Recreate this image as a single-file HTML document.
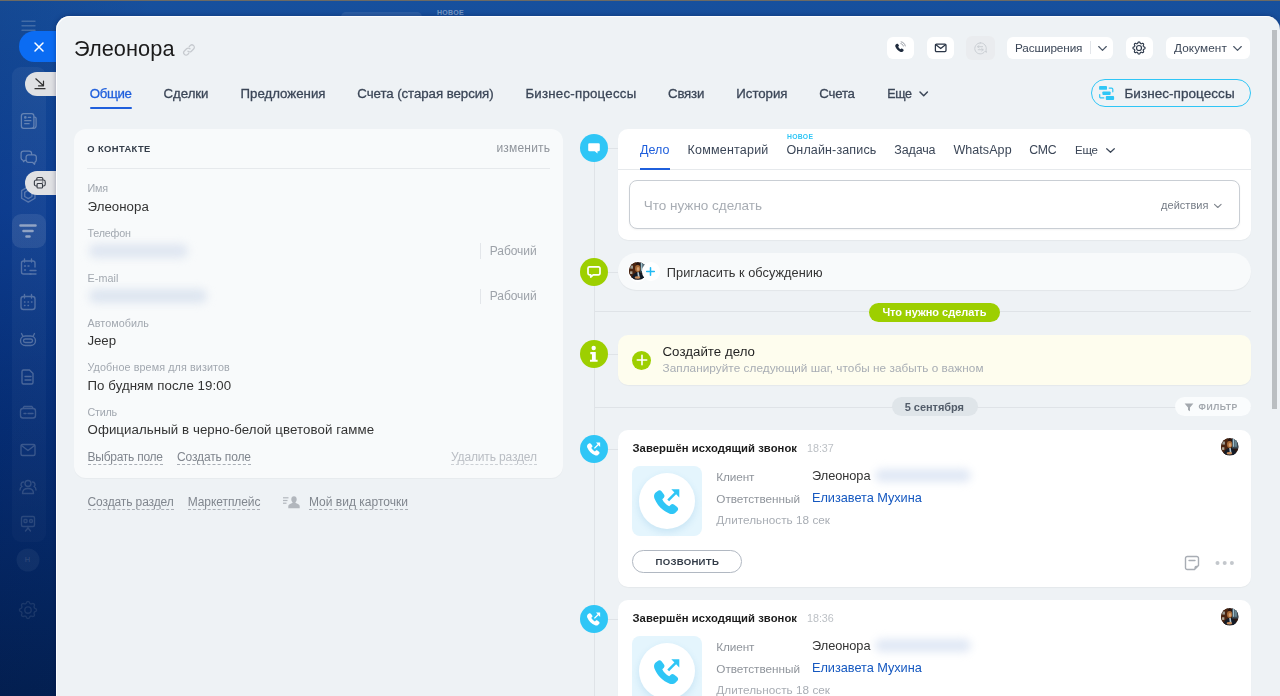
<!DOCTYPE html>
<html lang="ru">
<head>
<meta charset="utf-8">
<title>Элеонора</title>
<style>
*{box-sizing:border-box;margin:0;padding:0}
html,body{width:1280px;height:696px;overflow:hidden}
body{font-family:"Liberation Sans",sans-serif;position:relative;background:#0b3a86;color:#333}
.abs{position:absolute}
#bg{left:0;top:0;width:1280px;height:696px;background:linear-gradient(180deg,#17509d 0%,#0e4298 30%,#063078 62%,#032152 100%)}
#bgshade{left:0;top:0;width:1280px;height:696px;background:linear-gradient(90deg,rgba(0,10,60,.10) 0,rgba(0,10,60,0) 12%)}
#topline{left:0;top:0;width:1280px;height:1px;background:#6d6a63}
#panel{left:56.200px;top:15.800px;width:1224px;height:690px;background:#eef2f5;border-radius:14px 14px 0 0;box-shadow:inset 1px 1px 0 rgba(255,255,255,.85),0 0 5px rgba(0,10,50,.35)}
.card{border-radius:10px;background:#fff;box-shadow:0 1px 1px rgba(0,0,0,.04)}
.circ{left:579.800px;width:28.200px;height:28.200px;border-radius:50%}
.hb{top:37px;height:22.200px;border-radius:6px;background:#fff}
.t{position:absolute;white-space:nowrap;line-height:1}
.dash{border-bottom:1px dashed #a9aeb5;padding-bottom:.800px}
.med{-webkit-text-stroke:.3px currentColor}
.dashl{border-bottom-color:#ccd0d5}
</style>
</head>
<body>
<div id="bg" class="abs"></div>
<div id="bgshade" class="abs"></div>
<div id="topline" class="abs"></div>

<!-- LEFT RAIL -->
<div id="rail">
<div class="abs" style="left:12px;top:67px;width:34px;height:475px;border-radius:9px;background:linear-gradient(180deg,rgba(255,255,255,.05),rgba(255,255,255,.02))"></div>
<div class="abs" style="left:12px;top:214px;width:34px;height:34px;border-radius:9px;background:rgba(255,255,255,.085)"></div>
<svg class="abs" style="left:0;top:0" width="60" height="696" viewBox="0 0 60 696" fill="none" stroke="#e6e6e6" stroke-width="1.350" stroke-linecap="round" stroke-linejoin="round">
 <g opacity=".22" stroke-width="1.4"><path d="M22 21.3h13M22 25.8h13M22 30.2h13"/></g>
 <!-- news -->
 <g opacity=".36" stroke-width="1.250"><rect x="21.400" y="113.600" width="12.500" height="14.700" rx="2.300"/><path d="M33.900 117h.7a1.500 1.500 0 0 1 1.500 1.500v7.300a2.500 2.500 0 0 1-2.500 2.500h-3"/><circle cx="25.300" cy="117.400" r=".7"/><path d="M28.300 117.400h2.300M24.700 120.700h6.200M24.700 123.700h4.400"/></g>
 <!-- chat -->
 <g opacity=".36" stroke-width="1.250"><path d="M31.600 154.400v-.9a2.400 2.400 0 0 0-2.400-2.400h-5.700a2.400 2.400 0 0 0-2.400 2.400v4.400c0 1.100.7 2 1.700 2.300l.9 1.600.8-1.400h1.300"/><path d="M28.300 154.800h5.800a2.200 2.200 0 0 1 2.200 2.200v3.100a2.200 2.200 0 0 1-1.300 2l-.5 2.200-2-2h-4.200a2.200 2.200 0 0 1-2.200-2.200v-3.100a2.200 2.200 0 0 1 2.200-2.200z"/></g>
 <!-- hexagon -->
 <g opacity=".3" stroke-width="1.400"><path d="M28.30 186.70L34.97 190.55L34.97 198.25L28.30 202.10L21.63 198.25L21.63 190.55Z"/><path d="M28.30 190.20L31.94 192.30L31.94 196.50L28.30 198.60L24.66 196.50L24.66 192.30Z"/></g>
 <!-- filter (active) -->
 <g opacity=".55" stroke-width="2.6"><path d="M20.500 225.500h15M23.500 231h9M26.500 236.500h3"/></g>
 <!-- calendar list -->
 <g opacity=".3"><path d="M31 274h-7.500a2 2 0 0 1-2-2v-9a2 2 0 0 1 2-2h9.500a2 2 0 0 1 2 2v4"/><path d="M24.500 259v3M31.500 259v3M24.500 266h1M28 266h1M24.500 270h1M30 270.500h6M30 274h6"/></g>
 <!-- calendar -->
 <g opacity=".3"><rect x="21" y="296.500" width="14" height="13" rx="2.500"/><path d="M24.500 294.500v3.500M31.500 294.500v3.500M24.500 302h.5M28 302h.5M31.500 302h.5M24.500 305.500h.5M28 305.500h.5"/></g>
 <!-- robot -->
 <g opacity=".3"><rect x="20.500" y="336" width="15" height="9.500" rx="4.700"/><path d="M23 336.500l-1.500-3M33 336.500l1.500-3"/><rect x="23.500" y="339" width="9" height="3.500" rx="1.700"/></g>
 <!-- doc -->
 <g opacity=".28"><path d="M23.500 370h6l3.500 3.500v9a1.500 1.500 0 0 1-1.500 1.500h-8a1.500 1.500 0 0 1-1.500-1.500v-11a1.500 1.500 0 0 1 1.500-1.500z"/><path d="M25 376.500h6M25 380h6"/></g>
 <!-- card -->
 <g opacity=".22"><rect x="20.500" y="408.500" width="15" height="9.500" rx="2.500"/><path d="M23 408.500l1-2h8l1 2M24 413.500h2M28 413.500h5"/></g>
 <!-- mail -->
 <g opacity=".21"><rect x="21" y="444.500" width="14" height="11" rx="1.500"/><path d="M21.500 445.500l6.500 5 6.500-5"/></g>
 <!-- people -->
 <g opacity=".17"><circle cx="28" cy="483.500" r="3"/><path d="M22.500 493.500c0-3.500 2.500-5 5.500-5s5.500 1.500 5.500 5z"/><path d="M23.500 482a2.500 2.500 0 0 0-1.500 4.500c-1.500.7-2 2-2 3.500M32.500 482a2.500 2.500 0 0 1 1.500 4.500c1.500.7 2 2 2 3.500"/></g>
 <!-- presentation -->
 <g opacity=".15"><rect x="21.500" y="516.500" width="13" height="10" rx="1.500"/><path d="M25.500 531l2.500-3 2.500 3M28 526.500v2"/><rect x="24" y="519.500" width="3" height="3" rx=".7"/><circle cx="31" cy="521" r="1.500"/></g>
 <!-- H circle -->
 <g opacity=".05" stroke="none" fill="#fff"><circle cx="28" cy="560" r="11.500"/></g>
 <!-- gear -->
 <g opacity=".10"><circle cx="28" cy="610" r="3.200"/><path d="M28.00 601.50L28.41 601.55L28.82 601.72L29.19 601.99L29.48 602.55L29.73 603.11L30.00 603.42L30.27 603.65L30.56 603.81L30.88 603.90L31.24 603.94L31.65 603.90L32.22 603.68L32.82 603.50L33.28 603.56L33.68 603.73L34.01 603.99L34.27 604.32L34.44 604.72L34.50 605.18L34.32 605.78L34.10 606.35L34.06 606.76L34.10 607.12L34.19 607.44L34.35 607.73L34.58 608.00L34.89 608.27L35.45 608.52L36.01 608.81L36.28 609.18L36.45 609.59L36.50 610.00L36.45 610.41L36.28 610.82L36.01 611.19L35.45 611.48L34.89 611.73L34.58 612.00L34.35 612.27L34.19 612.56L34.10 612.88L34.06 613.24L34.10 613.65L34.32 614.22L34.50 614.82L34.44 615.28L34.27 615.68L34.01 616.01L33.68 616.27L33.28 616.44L32.82 616.50L32.22 616.32L31.65 616.10L31.24 616.06L30.88 616.10L30.56 616.19L30.27 616.35L30.00 616.58L29.73 616.89L29.48 617.45L29.19 618.01L28.82 618.28L28.41 618.45L28.00 618.50L27.59 618.45L27.18 618.28L26.81 618.01L26.52 617.45L26.27 616.89L26.00 616.58L25.73 616.35L25.44 616.19L25.12 616.10L24.76 616.06L24.35 616.10L23.78 616.32L23.18 616.50L22.72 616.44L22.32 616.27L21.99 616.01L21.73 615.68L21.56 615.28L21.50 614.82L21.68 614.22L21.90 613.65L21.94 613.24L21.90 612.88L21.81 612.56L21.65 612.27L21.42 612.00L21.11 611.73L20.55 611.48L19.99 611.19L19.72 610.82L19.55 610.41L19.50 610.00L19.55 609.59L19.72 609.18L19.99 608.81L20.55 608.52L21.11 608.27L21.42 608.00L21.65 607.73L21.81 607.44L21.90 607.12L21.94 606.76L21.90 606.35L21.68 605.78L21.50 605.18L21.56 604.72L21.73 604.32L21.99 603.99L22.32 603.73L22.72 603.56L23.18 603.50L23.78 603.68L24.35 603.90L24.76 603.94L25.12 603.90L25.44 603.81L25.73 603.65L26.00 603.42L26.27 603.11L26.52 602.55L26.81 601.99L27.18 601.72L27.59 601.55Z"/></g>
</svg>
<div class="t" style="left:24.500px;top:556px;font-size:8px;font-weight:bold;color:rgba(255,255,255,.10)">Н</div>
<!-- close pill -->
<div class="abs" style="left:18.700px;top:31px;width:60px;height:31px;border-radius:15.500px;background:#0b6cf3"></div>
<svg class="abs" style="left:33px;top:41px" width="12" height="12" viewBox="0 0 12 12" fill="none" stroke="#fff" stroke-width="1.500" stroke-linecap="round"><path d="M2 2l8 8M10 2l-8 8"/></svg>
<!-- collapse pill -->
<div class="abs" style="left:25.300px;top:71.500px;width:60px;height:24.300px;border-radius:12.200px;background:#e0e1e4"></div>
<svg class="abs" style="left:33px;top:76px" width="14" height="15" viewBox="0 0 14 15" fill="none" stroke="#333" stroke-width="1.200" stroke-linecap="round" stroke-linejoin="round"><path d="M2.800 2.800l7.700 7M10.500 5v4.800h-5M2 12.700h10"/></svg>
<!-- print pill -->
<div class="abs" style="left:24.800px;top:170.700px;width:60px;height:23.900px;border-radius:12px;background:#e0e1e4"></div>
<svg class="abs" style="left:33.200px;top:176.300px" width="13.600" height="13.600" viewBox="0 0 15 15" fill="none" stroke="#363b44" stroke-width="1.200" stroke-linecap="round" stroke-linejoin="round"><path d="M4.200 4.500v-1.500a1.300 1.300 0 0 1 1.300-1.300h4a1.300 1.300 0 0 1 1.300 1.300v1.500"/><rect x="1.500" y="4.500" width="12" height="6.500" rx="2"/><rect x="4.500" y="8.300" width="6" height="5" rx="1" fill="#e0e1e4"/><path d="M10.300 6.700h.6"/></svg>
</div>

<div class="abs" style="left:341px;top:11.700px;width:81px;height:12px;border-radius:5px;background:rgba(255,255,255,.09)"></div>
<div class="t" style="left:437px;top:9.300px;font-size:7px;font-weight:bold;letter-spacing:.300px;color:rgba(255,255,255,.42)">НОВОЕ</div>
<!-- PANEL -->
<div id="panel" class="abs"></div>

<!-- HEADER -->
<div id="header">
<!-- title link icon -->
<svg class="abs" style="left:182px;top:43px" width="14" height="14" viewBox="0 0 14 14" fill="none" stroke="#c6cacf" stroke-width="1.300" stroke-linecap="round"><path d="M6 8.200a2.400 2.400 0 0 0 3.400 0l2.200-2.200a2.400 2.400 0 0 0-3.400-3.400l-.9.900"/><path d="M8 5.800a2.400 2.400 0 0 0-3.400 0l-2.200 2.200a2.400 2.400 0 0 0 3.400 3.400l.9-.900"/></svg>
<!-- active tab underline -->
<div class="abs" style="left:89.500px;top:107px;width:42.500px;height:2px;background:#1f5fdc;border-radius:1px"></div>
<svg class="abs" style="left:918px;top:89px" width="11" height="10" viewBox="0 0 11 10" fill="none" stroke="#3b4657" stroke-width="1.500" stroke-linecap="round" stroke-linejoin="round"><path d="M2 3l3.700 3.700 3.700-3.700"/></svg>
<!-- buttons -->
<div class="abs hb" style="left:887px;width:27px"></div>
<div class="abs hb" style="left:927px;width:27px"></div>
<div class="abs hb" style="left:966px;width:29px;top:36px;height:24px;background:#eaecef"></div>
<div class="abs hb" style="left:1006.500px;width:106.500px"></div>
<div class="abs" style="left:1090px;top:41px;width:1px;height:13px;background:#e3e6ea"></div>
<div class="abs hb" style="left:1126px;width:27px"></div>
<div class="abs hb" style="left:1166px;width:83.500px"></div>
<!-- phone icon -->
<svg class="abs" style="left:892.500px;top:40.800px" width="14" height="13.200" viewBox="0 0 17 16"><path d="M4.300 3.600c.5-.5 1.300-.5 1.700 0l1 1.300c.4.500.3 1.100-.1 1.500l-.6.600c.6 1.300 1.600 2.300 2.900 3l.6-.6c.4-.4 1.100-.5 1.500-.1l1.300 1c.5.400.5 1.200 0 1.700l-.7.700c-.7.700-1.700.9-2.600.5-3-1.200-5.300-3.500-6.500-6.500-.3-.9-.1-1.900.6-2.600z" fill="#1f2b3d"/><path d="M9.600 3.200c1.500.3 2.600 1.400 2.900 2.900M9.900 1c2.600.4 4.600 2.400 5 5" stroke="#1f2b3d" stroke-width="1" fill="none" stroke-linecap="round" opacity=".55"/></svg>
<!-- mail icon -->
<svg class="abs" style="left:933px;top:42px" width="15" height="12" viewBox="0 0 15 12" fill="none" stroke="#2a3546" stroke-width="1.250" stroke-linejoin="round" stroke-linecap="round"><rect x="2.400" y="2.100" width="10.600" height="7.500" rx="1.100"/><path d="M2.900 2.800l4.800 3.700 4.800-3.700"/></svg>
<!-- chat swap icon (disabled) -->
<svg class="abs" style="left:973px;top:41px" width="14.800" height="14.800" viewBox="0 0 17 17" fill="none" stroke="#c9cdd2" stroke-width="1.100" stroke-linecap="round" stroke-linejoin="round"><path d="M8.300 1.700a6.300 6.300 0 1 0 5.400 9.600l1.800 1.200-.6-2.500a6.300 6.300 0 0 0-6.600-8.300z" transform="translate(0 .5)"/><path d="M5.500 6.500h5.500M5.500 6.500l1.500-1.400M5.500 6.500l1.500 1.400M11.500 10h-5.500M11.500 10l-1.500-1.400M11.500 10l-1.500 1.400"/></svg>
<!-- chevrons -->
<svg class="abs" style="left:1097px;top:43.500px" width="11" height="9" viewBox="0 0 11 9" fill="none" stroke="#4a5565" stroke-width="1.150" stroke-linecap="round" stroke-linejoin="round"><path d="M1.700 2.500l3.800 3.800 3.800-3.800"/></svg>
<svg class="abs" style="left:1232px;top:43.500px" width="11" height="9" viewBox="0 0 11 9" fill="none" stroke="#4a5565" stroke-width="1.150" stroke-linecap="round" stroke-linejoin="round"><path d="M1.700 2.500l3.800 3.800 3.800-3.800"/></svg>
<!-- gear -->
<svg class="abs" style="left:1131.100px;top:39.600px" width="16" height="16" viewBox="0 0 16 16" fill="none" stroke="#2f3b4c" stroke-width="1.200" stroke-linejoin="round"><circle cx="8" cy="8" r="2.500"/><path d="M8.00 1.95L8.30 1.99L8.58 2.11L8.84 2.33L9.04 2.75L9.21 3.18L9.39 3.42L9.58 3.59L9.78 3.70L10.00 3.77L10.26 3.78L10.55 3.74L10.97 3.55L11.42 3.39L11.75 3.43L12.04 3.54L12.28 3.72L12.46 3.96L12.57 4.25L12.61 4.58L12.45 5.03L12.26 5.45L12.22 5.74L12.23 6.00L12.30 6.22L12.41 6.42L12.58 6.61L12.82 6.79L13.25 6.96L13.67 7.16L13.89 7.42L14.01 7.70L14.05 8.00L14.01 8.30L13.89 8.58L13.67 8.84L13.25 9.04L12.82 9.21L12.58 9.39L12.41 9.58L12.30 9.78L12.23 10.00L12.22 10.26L12.26 10.55L12.45 10.97L12.61 11.42L12.57 11.75L12.46 12.04L12.28 12.28L12.04 12.46L11.75 12.57L11.42 12.61L10.97 12.45L10.55 12.26L10.26 12.22L10.00 12.23L9.78 12.30L9.58 12.41L9.39 12.58L9.21 12.82L9.04 13.25L8.84 13.67L8.58 13.89L8.30 14.01L8.00 14.05L7.70 14.01L7.42 13.89L7.16 13.67L6.96 13.25L6.79 12.82L6.61 12.58L6.42 12.41L6.22 12.30L6.00 12.23L5.74 12.22L5.45 12.26L5.03 12.45L4.58 12.61L4.25 12.57L3.96 12.46L3.72 12.28L3.54 12.04L3.43 11.75L3.39 11.42L3.55 10.97L3.74 10.55L3.78 10.26L3.77 10.00L3.70 9.78L3.59 9.58L3.42 9.39L3.18 9.21L2.75 9.04L2.33 8.84L2.11 8.58L1.99 8.30L1.95 8.00L1.99 7.70L2.11 7.42L2.33 7.16L2.75 6.96L3.18 6.79L3.42 6.61L3.59 6.42L3.70 6.22L3.77 6.00L3.78 5.74L3.74 5.45L3.55 5.03L3.39 4.58L3.43 4.25L3.54 3.96L3.72 3.72L3.96 3.54L4.25 3.43L4.58 3.39L5.03 3.55L5.45 3.74L5.74 3.78L6.00 3.77L6.22 3.70L6.42 3.59L6.61 3.42L6.79 3.18L6.96 2.75L7.16 2.33L7.42 2.11L7.70 1.99Z"/></svg>
<!-- BP button -->
<div class="abs" style="left:1090.500px;top:79px;width:160.500px;height:27.900px;border-radius:14px;border:1.300px solid #2fc6f6;background:#eff3f6"></div>
<svg class="abs" style="left:1098px;top:85px" width="17" height="16" viewBox="0 0 17 16"><g fill="#2fc6f6"><rect x="1.100" y="1.100" width="7.900" height="3.700" rx=".9"/><rect x="4.400" y="6.400" width="8.200" height="3.600" rx=".9"/><rect x="7.800" y="11.100" width="8.300" height="3.800" rx=".9"/></g><g fill="none" stroke="#2fc6f6" stroke-width="1.200" stroke-linecap="round"><path d="M11.200 3.100h2.400a1.200 1.200 0 0 1 1.200 1.200v2.500M1.700 9.500v2.200a1.200 1.200 0 0 0 1.200 1.200h2.900"/></g></svg>
</div>

<!-- LEFT CARD -->
<div id="leftcard">
<div class="abs" style="left:74px;top:128.500px;width:489px;height:349.500px;border-radius:12px;background:#f8fafb;box-shadow:0 1px 1px rgba(0,0,0,.03)"></div>
<div class="abs" style="left:87px;top:168px;width:463px;height:1px;background:#e6e9ec"></div>
<!-- blurred phone / email -->
<div class="abs" style="left:89px;top:243.500px;width:99px;height:14px;border-radius:7px;background:#dfe6f1;filter:blur(4.200px)"></div>
<div class="abs" style="left:89px;top:289px;width:118px;height:14px;border-radius:7px;background:#dde5f0;filter:blur(4.200px)"></div>
<div class="abs" style="left:480px;top:243px;width:1px;height:15.500px;background:#e3e6ea"></div>
<div class="abs" style="left:480px;top:288.500px;width:1px;height:15px;background:#e3e6ea"></div>
<!-- my view icon -->
<svg class="abs" style="left:282px;top:495px" width="19" height="15" viewBox="0 0 19 15"><g fill="#b2b7bd"><path d="M12 1.200c1.700 0 2.700 1.300 2.700 3 0 1.200-.5 2.400-1.300 3 .1.700.6 1 1.500 1.400 1.300.5 2.600 1 2.800 2.600v2h-11.400v-2c.2-1.600 1.500-2.100 2.800-2.600.9-.4 1.400-.7 1.500-1.400-.8-.6-1.300-1.800-1.300-3 0-1.700 1-3 2.700-3z"/><rect x="1" y="2.200" width="5.500" height="1.200"/><rect x="1" y="4.900" width="4.500" height="1.200"/><rect x="1" y="7.600" width="3.500" height="1.200"/></g></svg>
</div>

<!-- TIMELINE -->
<div id="timeline">
<svg width="0" height="0" style="position:absolute"><defs>
<symbol id="ava" viewBox="0 0 20 20"><clipPath id="avc"><circle cx="10" cy="10" r="10"/></clipPath><g clip-path="url(#avc)">
<rect width="20" height="20" fill="#2a1610"/>
<rect x="0" y="0" width="8" height="20" fill="#4a2410"/>
<rect x="1.500" y="4" width="3" height="3.500" fill="#9a9a92"/><rect x="1.200" y="10.500" width="2.600" height="3" fill="#b3aa98"/>
<rect x="12.500" y="0" width="7.500" height="12" fill="#3a4a55"/>
<rect x="13.500" y="1" width="1.600" height="9" fill="#9fc0cc"/><rect x="16.300" y="2" width="1.400" height="8" fill="#7fa3b0"/>
<path d="M3 20c0-5 2.500-8 7-8.500 4.500.5 7.500 3.500 7.500 8.500z" fill="#131b27"/>
<path d="M9.300 11.500l1.800 0 .9 5.500-1.800 1.500z" fill="#b4c6cc"/>
<ellipse cx="9.800" cy="7.300" rx="3" ry="3.800" fill="#a86a36"/>
<ellipse cx="10.200" cy="7.900" rx="1.500" ry="2.200" fill="#d6a070"/>
<ellipse cx="9.500" cy="17.300" rx="3.200" ry="1.400" fill="#c98c5a"/>
</g></symbol>
<path id="ph" transform="translate(-.4 -.8) scale(1.22)" d="M3.400 3.200c.9-.9 2.300-.8 3.100.2l2 2.600c.6.800.6 1.900-.1 2.600l-1.300 1.300c1.200 2.500 3.200 4.500 5.700 5.700l1.300-1.300c.7-.7 1.800-.8 2.600-.1l2.600 2c1 .8 1.100 2.200.2 3.100l-1.400 1.400c-1.300 1.300-3.200 1.700-4.900 1-5.700-2.300-10.200-6.800-12.500-12.500-.7-1.700-.3-3.600 1-4.900z"/>
<path id="arr" d="M13.300 11.400L21.300 3.400L23.100 5.200L15.100 13.200ZM17.300 1.200h8v8.400z"/>
</defs></svg>
<!-- vertical line -->
<div class="abs" style="left:593.800px;top:150px;width:1px;height:560px;background:#dfe3e7"></div>
<!-- editor card -->
<div class="abs card" style="left:618px;top:129px;width:633px;height:111px"></div>
<div class="abs" style="left:608px;top:148px;width:10px;height:1px;background:#dfe3e7"></div>
<div class="abs" style="left:618px;top:169px;width:633px;height:1px;background:#e6e9ec"></div>
<div class="abs" style="left:640px;top:168.400px;width:30px;height:1.600px;background:#1f5fdc"></div>
<div class="abs" style="left:628.500px;top:180px;width:611.500px;height:49.300px;border-radius:8px;border:1px solid #c9ced4;background:#fff;box-shadow:0 1px 2px rgba(0,0,0,.05)"></div>
<svg class="abs" style="left:1105px;top:145.500px" width="11" height="9" viewBox="0 0 11 9" fill="none" stroke="#3b4657" stroke-width="1.200" stroke-linecap="round" stroke-linejoin="round"><path d="M1.700 2.700l3.800 3.600 3.800-3.600"/></svg>
<svg class="abs" style="left:1213px;top:201.500px" width="10" height="8" viewBox="0 0 10 8" fill="none" stroke="#80868e" stroke-width="1.100" stroke-linecap="round" stroke-linejoin="round"><path d="M1.500 2.300l3.300 3.200 3.300-3.200"/></svg>
<div class="abs circ" style="top:133.800px;background:#2fc6f6"></div>
<svg class="abs" style="left:587px;top:142px" width="14" height="13" viewBox="0 0 14 13"><path d="M2.500 1.300h9a1.300 1.300 0 0 1 1.300 1.300v5.400a1.300 1.300 0 0 1-1.300 1.300h-1v2.200l-2.700-2.200h-5.300a1.300 1.300 0 0 1-1.300-1.300v-5.400a1.300 1.300 0 0 1 1.300-1.300z" fill="#fff"/></svg>

<!-- discussion row -->
<div class="abs" style="left:618px;top:253px;width:633px;height:36.500px;border-radius:18.200px;background:#f8fafb;box-shadow:0 1px 1px rgba(0,0,0,.05)"></div>
<div class="abs" style="left:608px;top:272px;width:10px;height:1px;background:#dfe3e7"></div>
<div class="abs circ" style="top:258px;background:#9dcf00"></div>
<svg class="abs" style="left:586px;top:264px" width="16" height="16" viewBox="0 0 16 16" fill="none" stroke="#fff" stroke-width="1.700" stroke-linejoin="round"><path d="M3.500 2.800h9a1.500 1.500 0 0 1 1.500 1.500v5a1.500 1.500 0 0 1-1.500 1.500h-5.300l-2.500 2.200v-2.200h-1.200a1.500 1.500 0 0 1-1.500-1.500v-5a1.500 1.500 0 0 1 1.500-1.500z"/></svg>
<div class="abs" style="left:627.500px;top:261px;width:20.500px;height:20.500px;border-radius:50%;background:#fff"></div><svg class="abs" style="left:628.800px;top:262.300px" width="17.800" height="17.800"><use href="#ava"/></svg>
<div class="abs" style="left:641.700px;top:262.200px;width:18.500px;height:18.500px;border-radius:50%;background:#fff"></div>
<svg class="abs" style="left:645px;top:266px" width="11" height="11" viewBox="0 0 11 11" fill="none" stroke="#1fb9f3" stroke-width="1.500" stroke-linecap="round"><path d="M5.500 1.700v7.600M1.700 5.500h7.600"/></svg>

<!-- todo section label -->
<div class="abs" style="left:594px;top:311px;width:657px;height:1px;background:#dfe3e7"></div>
<div class="abs" style="left:869px;top:302.500px;width:131px;height:19px;border-radius:9.500px;background:#9dcf00"></div>

<!-- yellow card -->
<div class="abs" style="left:618px;top:335px;width:633px;height:49.500px;border-radius:10px;background:#fefdee;box-shadow:0 1px 1px rgba(0,0,0,.04)"></div>
<div class="abs" style="left:608px;top:354px;width:10px;height:1px;background:#dfe3e7"></div>
<div class="abs circ" style="top:340px;background:#9dcf00"></div>
<svg class="abs" style="left:588.200px;top:344.700px" width="11.600" height="18.600" viewBox="0 0 10 16" fill="#fff"><circle cx="4.900" cy="2.600" r="1.900"/><path d="M2 6h4.700v6.600h1.600v1.900h-6.600v-1.900h1.700v-4.700h-1.400z"/></svg>
<div class="abs" style="left:632px;top:350.500px;width:19px;height:19px;border-radius:10px;background:#9dcf00"></div>
<svg class="abs" style="left:635.500px;top:354px" width="12" height="12" viewBox="0 0 12 12" fill="none" stroke="#fff" stroke-width="1.600" stroke-linecap="round"><path d="M6 1.300v9.400M1.300 6h9.400"/></svg>

<!-- date row -->
<div class="abs" style="left:594px;top:407px;width:657px;height:1px;background:#dfe3e7"></div>
<div class="abs" style="left:891.500px;top:397.300px;width:86px;height:19px;border-radius:9.500px;background:#dfe5e9"></div>
<div class="abs" style="left:1175px;top:397.300px;width:76px;height:19px;border-radius:9.500px;background:#fafcfd"></div>
<svg class="abs" style="left:1183.500px;top:402.500px" width="10" height="9" viewBox="0 0 10 9"><path d="M.6.500h8.800l-3.400 3.900v3.800l-2-1.200v-2.600z" fill="#a3a8ae"/></svg>

<div class="abs card" style="left:618px;top:430px;width:633px;height:156.500px"></div>
<div class="abs" style="left:608px;top:449px;width:10px;height:1px;background:#dfe3e7"></div>
<div class="abs circ" style="top:434.800px;background:#2fc6f6"></div>
<svg class="abs" style="left:587.300px;top:442.2px" width="14.560" height="14.560" viewBox="0 0 28 28"><use href="#ph" fill="#fff"/><use href="#arr" fill="#fff"/></svg>
<div class="abs" style="left:632px;top:466px;width:70px;height:70px;border-radius:8px;background:#e4f5fd"></div>
<div class="abs" style="left:639px;top:473px;width:56px;height:56px;border-radius:28px;background:#fff;box-shadow:0 3px 7px rgba(47,140,200,.16)"></div>
<svg class="abs" style="left:654px;top:488px" width="28" height="28" viewBox="0 0 28 28"><use href="#ph" fill="#2fc6f6"/><use href="#arr" fill="#2fc6f6"/></svg>
<div class="abs" style="left:875px;top:469px;width:96px;height:13px;border-radius:7px;background:#e0e8f5;filter:blur(4.200px)"></div>
<svg class="abs" style="left:1221px;top:438.2px" width="17.600" height="17.600"><use href="#ava"/></svg>

<!-- pozvonit button -->
<div class="abs" style="left:632px;top:550px;width:110px;height:22.500px;border-radius:11.300px;border:1px solid #b1b8c2;background:#fff"></div>
<!-- note + dots -->
<svg class="abs" style="left:1184px;top:555px" width="16" height="16" viewBox="0 0 16 16" fill="none" stroke="#a8adb4" stroke-width="1.400" stroke-linejoin="round" stroke-linecap="round"><path d="M3.300 1.500h9.400a1.800 1.800 0 0 1 1.800 1.800v7.200l-4 4h-7.200a1.800 1.800 0 0 1-1.800-1.800v-9.400a1.800 1.800 0 0 1 1.800-1.800z"/><path d="M14.300 10.700h-2.300a1.500 1.500 0 0 0-1.500 1.500v2.100" fill="#a8adb4" stroke="none"/><path d="M5 5.500h6"/></svg>
<svg class="abs" style="left:1215px;top:560px" width="20" height="6" viewBox="0 0 20 6" fill="#c3c7cc"><circle cx="2.500" cy="3" r="2"/><circle cx="9.700" cy="3" r="2"/><circle cx="16.900" cy="3" r="2"/></svg>

<div class="abs card" style="left:618px;top:600px;width:633px;height:156.500px"></div>
<div class="abs" style="left:608px;top:619px;width:10px;height:1px;background:#dfe3e7"></div>
<div class="abs circ" style="top:604.800px;background:#2fc6f6"></div>
<svg class="abs" style="left:587.300px;top:612.2px" width="14.560" height="14.560" viewBox="0 0 28 28"><use href="#ph" fill="#fff"/><use href="#arr" fill="#fff"/></svg>
<div class="abs" style="left:632px;top:636px;width:70px;height:70px;border-radius:8px;background:#e4f5fd"></div>
<div class="abs" style="left:639px;top:643px;width:56px;height:56px;border-radius:28px;background:#fff;box-shadow:0 3px 7px rgba(47,140,200,.16)"></div>
<svg class="abs" style="left:654px;top:658px" width="28" height="28" viewBox="0 0 28 28"><use href="#ph" fill="#2fc6f6"/><use href="#arr" fill="#2fc6f6"/></svg>
<div class="abs" style="left:875px;top:639px;width:96px;height:13px;border-radius:7px;background:#e0e8f5;filter:blur(4.200px)"></div>
<svg class="abs" style="left:1221px;top:608.2px" width="17.600" height="17.600"><use href="#ava"/></svg>

<!-- scrollbar -->
<div class="abs" style="left:1271.500px;top:29.500px;width:5.500px;height:379px;background:#babec1"></div>
</div>

<div id="txt" class="abs" style="left:0;top:0;width:1280px;height:696px;will-change:transform">
<span class="t" style="left:74.0px;top:37.6px;font-size:21.75px;color:#1b1b1b;letter-spacing:0.056px;">Элеонора</span>
<span class="t med" style="left:89.8px;top:86.6px;font-size:13.25px;color:#1f5fdc;letter-spacing:-0.395px;">Общие</span>
<span class="t med" style="left:163.5px;top:86.6px;font-size:13.25px;color:#3b4657;letter-spacing:-0.034px;">Сделки</span>
<span class="t med" style="left:240.5px;top:86.6px;font-size:13.25px;color:#3b4657;letter-spacing:0.006px;">Предложения</span>
<span class="t med" style="left:357.3px;top:86.6px;font-size:13.25px;color:#3b4657;letter-spacing:-0.055px;">Счета (старая версия)</span>
<span class="t med" style="left:525.4px;top:86.6px;font-size:13.25px;color:#3b4657;letter-spacing:0.242px;">Бизнес-процессы</span>
<span class="t med" style="left:668.0px;top:86.6px;font-size:13.25px;color:#3b4657;letter-spacing:-0.181px;">Связи</span>
<span class="t med" style="left:736.3px;top:86.6px;font-size:13.25px;color:#3b4657;letter-spacing:-0.032px;">История</span>
<span class="t med" style="left:819.3px;top:86.6px;font-size:13.25px;color:#3b4657;letter-spacing:-0.212px;">Счета</span>
<span class="t med" style="left:887.2px;top:88.2px;font-size:12.5px;color:#3b4657;letter-spacing:-0.319px;">Еще</span>
<span class="t" style="left:1015.0px;top:41.9px;font-size:11.75px;color:#3b4657;letter-spacing:-0.094px;">Расширения</span>
<span class="t" style="left:1174.0px;top:41.9px;font-size:11.75px;color:#3b4657;letter-spacing:0.096px;">Документ</span>
<span class="t med" style="left:1124.4px;top:86.5px;font-size:13.5px;color:#3b4657;letter-spacing:0.056px;">Бизнес-процессы</span>
<span class="t" style="left:87.3px;top:144.2px;font-size:9.4px;color:#333c48;font-weight:bold;letter-spacing:0.385px;">О КОНТАКТЕ</span>
<span class="t" style="left:496.4px;top:142.0px;font-size:12.0px;color:#8f949b;letter-spacing:0.197px;">изменить</span>
<span class="t" style="left:87.5px;top:183.2px;font-size:10.75px;color:#a2a8b0;letter-spacing:-0.227px;">Имя</span>
<span class="t" style="left:87.5px;top:199.8px;font-size:13.25px;color:#333;letter-spacing:0.045px;">Элеонора</span>
<span class="t" style="left:87.5px;top:227.9px;font-size:10.75px;color:#a2a8b0;letter-spacing:-0.185px;">Телефон</span>
<span class="t" style="left:489.8px;top:244.8px;font-size:12.0px;color:#9da2a9;letter-spacing:-0.072px;">Рабочий</span>
<span class="t" style="left:87.5px;top:272.9px;font-size:10.75px;color:#a2a8b0;letter-spacing:0.066px;">E-mail</span>
<span class="t" style="left:489.8px;top:290.0px;font-size:12.0px;color:#9da2a9;letter-spacing:-0.072px;">Рабочий</span>
<span class="t" style="left:87.5px;top:317.9px;font-size:10.75px;color:#a2a8b0;letter-spacing:0.062px;">Автомобиль</span>
<span class="t" style="left:87.5px;top:334.0px;font-size:13.25px;color:#333;letter-spacing:-0.078px;">Jeep</span>
<span class="t" style="left:87.5px;top:362.1px;font-size:10.75px;color:#a2a8b0;letter-spacing:0.111px;">Удобное время для визитов</span>
<span class="t" style="left:87.5px;top:379.3px;font-size:13.25px;color:#333;letter-spacing:0.066px;">По будням после 19:00</span>
<span class="t" style="left:87.5px;top:406.6px;font-size:10.75px;color:#a2a8b0;letter-spacing:-0.220px;">Стиль</span>
<span class="t" style="left:87.5px;top:422.8px;font-size:13.25px;color:#333;letter-spacing:0.084px;">Официальный в черно-белой цветовой гамме</span>
<span class="t dash" style="left:87.5px;top:451.1px;font-size:12.0px;color:#80868e;letter-spacing:-0.251px;">Выбрать поле</span>
<span class="t dash" style="left:177.0px;top:451.1px;font-size:12.0px;color:#80868e;letter-spacing:-0.139px;">Создать поле</span>
<span class="t dash dashl" style="left:451.0px;top:451.1px;font-size:12.0px;color:#b9bdc3;letter-spacing:-0.145px;">Удалить раздел</span>
<span class="t dash" style="left:87.5px;top:496.0px;font-size:12.0px;color:#80868e;letter-spacing:-0.106px;">Создать раздел</span>
<span class="t dash" style="left:187.7px;top:496.0px;font-size:12.0px;color:#80868e;letter-spacing:-0.072px;">Маркетплейс</span>
<span class="t dash" style="left:308.9px;top:496.0px;font-size:12.0px;color:#80868e;letter-spacing:0.017px;">Мой вид карточки</span>
<span class="t" style="left:640.0px;top:143.7px;font-size:12.5px;color:#1f5fdc;letter-spacing:0.036px;">Дело</span>
<span class="t" style="left:687.5px;top:143.7px;font-size:12.5px;color:#3b4657;letter-spacing:0.207px;">Комментарий</span>
<span class="t" style="left:786.5px;top:143.7px;font-size:12.5px;color:#3b4657;letter-spacing:0.140px;">Онлайн-запись</span>
<span class="t" style="left:894.3px;top:143.7px;font-size:12.5px;color:#3b4657;letter-spacing:-0.147px;">Задача</span>
<span class="t" style="left:953.4px;top:143.7px;font-size:12.5px;color:#3b4657;letter-spacing:0.075px;">WhatsApp</span>
<span class="t" style="left:1029.3px;top:143.9px;font-size:12.25px;color:#3b4657;letter-spacing:-0.183px;">СМС</span>
<span class="t" style="left:1075.0px;top:144.6px;font-size:11.5px;color:#3b4657;letter-spacing:-0.203px;">Еще</span>
<span class="t" style="left:787.0px;top:134.0px;font-size:6.8px;color:#2fc6f6;font-weight:bold;letter-spacing:0.309px;">НОВОЕ</span>
<span class="t" style="left:643.8px;top:198.6px;font-size:13.5px;color:#a8adb4;letter-spacing:-0.012px;">Что нужно сделать</span>
<span class="t" style="left:1161.0px;top:200.0px;font-size:11.0px;color:#757c86;letter-spacing:0.047px;">действия</span>
<span class="t" style="left:666.8px;top:267.1px;font-size:12.75px;color:#333;letter-spacing:0.038px;">Пригласить к обсуждению</span>
<span class="t" style="left:882.4px;top:306.7px;font-size:11.0px;color:#fff;font-weight:bold;letter-spacing:-0.015px;">Что нужно сделать</span>
<span class="t" style="left:662.5px;top:345.1px;font-size:13.25px;color:#1f1f1f;letter-spacing:0.044px;">Создайте дело</span>
<span class="t" style="left:662.5px;top:361.6px;font-size:11.75px;color:#a8adb4;letter-spacing:0.055px;">Запланируйте следующий шаг, чтобы не забыть о важном</span>
<span class="t" style="left:904.8px;top:401.7px;font-size:11.0px;color:#525c69;font-weight:bold;letter-spacing:-0.051px;">5 сентября</span>
<span class="t" style="left:1198.6px;top:403.0px;font-size:8.6px;color:#a3a8ae;font-weight:bold;letter-spacing:0.571px;">ФИЛЬТР</span>
<span class="t" style="left:632.5px;top:443.0px;font-size:11.25px;color:#1b1b1b;font-weight:bold;letter-spacing:0.055px;">Завершён исходящий звонок</span>
<span class="t" style="left:807.0px;top:443.4px;font-size:10.75px;color:#bdc1c6;letter-spacing:-0.027px;">18:37</span>
<span class="t" style="left:716.3px;top:471.4px;font-size:11.75px;color:#8f949b;letter-spacing:-0.094px;">Клиент</span>
<span class="t" style="left:812.0px;top:470.2px;font-size:12.75px;color:#333;letter-spacing:-0.027px;">Элеонора</span>
<span class="t" style="left:716.3px;top:493.1px;font-size:11.75px;color:#8f949b;letter-spacing:-0.018px;">Ответственный</span>
<span class="t" style="left:812.0px;top:491.8px;font-size:12.75px;color:#1558c0;letter-spacing:-0.040px;">Елизавета Мухина</span>
<span class="t" style="left:716.3px;top:513.9px;font-size:11.75px;color:#a8adb4;letter-spacing:0.022px;">Длительность 18 сек</span>
<span class="t" style="left:655.5px;top:556.9px;font-size:9.6px;color:#333c48;font-weight:bold;letter-spacing:0.274px;">ПОЗВОНИТЬ</span>
<span class="t" style="left:632.5px;top:613.0px;font-size:11.25px;color:#1b1b1b;font-weight:bold;letter-spacing:0.055px;">Завершён исходящий звонок</span>
<span class="t" style="left:807.0px;top:613.4px;font-size:10.75px;color:#bdc1c6;letter-spacing:-0.027px;">18:36</span>
<span class="t" style="left:716.3px;top:641.4px;font-size:11.75px;color:#8f949b;letter-spacing:-0.094px;">Клиент</span>
<span class="t" style="left:812.0px;top:640.2px;font-size:12.75px;color:#333;letter-spacing:-0.027px;">Элеонора</span>
<span class="t" style="left:716.3px;top:663.1px;font-size:11.75px;color:#8f949b;letter-spacing:-0.018px;">Ответственный</span>
<span class="t" style="left:812.0px;top:661.8px;font-size:12.75px;color:#1558c0;letter-spacing:-0.040px;">Елизавета Мухина</span>
<span class="t" style="left:716.3px;top:683.9px;font-size:11.75px;color:#a8adb4;letter-spacing:0.022px;">Длительность 18 сек</span>
</div>
</body>
</html>
